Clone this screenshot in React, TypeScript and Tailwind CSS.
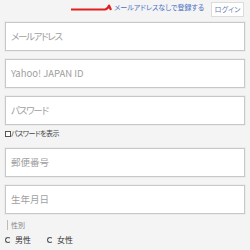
import React from "react";

const font = { fontFamily: '"Noto Sans CJK JP", "Noto Sans", sans-serif' };

function Field({ placeholder, className = "" }: { placeholder: string; className?: string }) {
  return (
    <div
      className={`mx-[5px] h-[29px] border border-[#c8c8c8] bg-white shadow-[0_0_0_1px_#ececec] flex items-center pl-[5px] text-[9.5px] text-[#a0a0a0] [font-feature-settings:'palt'] ${className}`}
    >
      {placeholder}
    </div>
  );
}

export default function App() {
  return (
    <div className="w-[250px] h-[250px] bg-[#f4f4f4] overflow-hidden" style={font}>
      <div className="h-[20px] flex items-start justify-end pr-[6px] pt-[2px]">
        <svg width="41" height="10" viewBox="0 0 41 10" className="mr-[2px] mt-[1px]">
          <path d="M0 6.5 L34 6.5 Q37 6 38 2.5 L40 7" stroke="#e02020" strokeWidth="2.2" fill="none" strokeLinejoin="round" />
        </svg>
        <span className="text-[7px] mt-[2px] text-[#4a6fc4] leading-none mr-[7px] [font-feature-settings:'palt']">メールアドレスなしで登録する</span>
        <div className="h-[15px] w-[33px] justify-center border border-[#dcdcdc] bg-white flex items-center text-[7px] text-[#6a7fb0] [font-feature-settings:'palt']">ログイン</div>
      </div>
      <div className="pt-[2px]">
        <Field placeholder="メールアドレス" className="tracking-[-1.3px]" />
        <Field placeholder="Yahoo! JAPAN ID" className="mt-[8px] text-[#909090]" />
        <Field placeholder="パスワード" className="mt-[8px] tracking-[-1.2px]" />
        <div className="flex items-center mt-[4px] ml-[5px] h-[9px]">
          <div className="w-[6px] h-[6px] border border-[#555] bg-white" />
          <span className="text-[7px] text-[#444] leading-none tracking-[-0.5px] [font-feature-settings:'palt']">パスワードを表示</span>
        </div>
        <Field placeholder="郵便番号" className="mt-[10px]" />
        <Field placeholder="生年月日" className="mt-[8px]" />
        <div className="ml-[7px] mt-[6px] border-l border-[#bbb] pl-[3px] h-[10px] flex items-center text-[7px] text-[#888]">性別</div>
        <div className="flex items-center mt-[4px] ml-[5px] text-[8px] text-[#333]">
          <div className="flex items-center">
            <div className="w-[6px] h-[6px] rounded-full border border-[#555] border-r-transparent mr-[4px]" />
            <span>男性</span>
          </div>
          <div className="flex items-center ml-[16px]">
            <div className="w-[6px] h-[6px] rounded-full border border-[#555] border-r-transparent mr-[4px]" />
            <span>女性</span>
          </div>
        </div>
      </div>
    </div>
  );
}
